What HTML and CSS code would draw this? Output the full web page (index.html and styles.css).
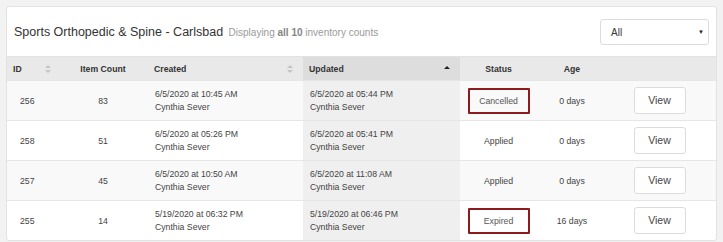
FILE: index.html
```html
<!DOCTYPE html>
<html>
<head>
<meta charset="utf-8">
<link rel="stylesheet" href="styles.css">
</head>
<body>
<div class="card">
  <div class="card-head">
    <div class="title">Sports Orthopedic &amp; Spine - Carlsbad <span class="sub">Displaying <b>all 10</b> inventory counts</span></div>
    <div class="select"><span>All</span><span class="caret">&#9660;</span></div>
  </div>
  <table class="grid">
    <colgroup>
      <col class="c-id"><col class="c-count"><col class="c-created"><col class="c-updated"><col class="c-status"><col class="c-age"><col class="c-view">
    </colgroup>
    <thead>
      <tr>
        <th class="left"><div class="th-in th-id">ID<svg class="sort" width="6" height="8" viewBox="0 0 6 8"><path d="M3 0L6 3H0z M3 8L6 5H0z" fill="#c4c4c4"/></svg></div></th>
        <th>Item Count</th>
        <th class="left"><div class="th-in">Created<svg class="sort" width="6" height="8" viewBox="0 0 6 8"><path d="M3 0L6 3H0z M3 8L6 5H0z" fill="#c4c4c4"/></svg></div></th>
        <th class="left sorted"><div class="th-in">Updated<svg class="sort" width="6" height="8" viewBox="0 0 6 8"><path d="M3 1L6 4H0z" fill="#222"/></svg></div></th>
        <th>Status</th>
        <th>Age</th>
        <th></th>
      </tr>
    </thead>
    <tbody>
      <tr class="odd">
        <td class="id">256</td><td class="center">83</td>
        <td class="date">6/5/2020 at 10:45 AM<br>Cynthia Sever</td>
        <td class="date sorted">6/5/2020 at 05:44 PM<br>Cynthia Sever</td>
        <td class="center"><span class="badge">Cancelled</span></td>
        <td class="center">0 days</td>
        <td class="center"><span class="btn">View</span></td>
      </tr>
      <tr>
        <td class="id">258</td><td class="center">51</td>
        <td class="date">6/5/2020 at 05:26 PM<br>Cynthia Sever</td>
        <td class="date sorted">6/5/2020 at 05:41 PM<br>Cynthia Sever</td>
        <td class="center">Applied</td>
        <td class="center">0 days</td>
        <td class="center"><span class="btn">View</span></td>
      </tr>
      <tr class="odd">
        <td class="id">257</td><td class="center">45</td>
        <td class="date">6/5/2020 at 10:50 AM<br>Cynthia Sever</td>
        <td class="date sorted">6/5/2020 at 11:08 AM<br>Cynthia Sever</td>
        <td class="center">Applied</td>
        <td class="center">0 days</td>
        <td class="center"><span class="btn">View</span></td>
      </tr>
      <tr>
        <td class="id">255</td><td class="center">14</td>
        <td class="date">5/19/2020 at 06:32 PM<br>Cynthia Sever</td>
        <td class="date sorted">5/19/2020 at 06:46 PM<br>Cynthia Sever</td>
        <td class="center"><span class="badge">Expired</span></td>
        <td class="center">16 days</td>
        <td class="center"><span class="btn">View</span></td>
      </tr>
    </tbody>
  </table>
</div>
</body>
</html>
```
FILE: styles.css
```css
html, body { margin: 0; padding: 0; }
body {
  background: #f2f2f2;
  padding: 6px;
  font-family: "Liberation Sans", Arial, sans-serif;
  color: #333;
  font-size: 9px;
}
.card {
  background: #fff;
  border: 1px solid #e2e2e2;
  border-radius: 3px;
  width: 709px;
}
.card-head {
  height: 49px;
  display: flex;
  align-items: center;
  justify-content: space-between;
  padding: 0 7px;
}
.title {
  font-size: 12.5px;
  color: #333;
  padding-top: 1px;
}
.sub {
  font-size: 10px;
  color: #9a9a9a;
  margin-left: 2px;
}
.sub b { color: #858585; }
.select {
  box-sizing: border-box;
  width: 109px;
  height: 26px;
  border: 1px solid #dcdcdc;
  border-radius: 3px;
  display: flex;
  align-items: center;
  justify-content: space-between;
  padding: 0 4px 0 10px;
  font-size: 10px;
  color: #333;
  margin-top: 1px;
}
.caret { font-size: 6px; color: #222; }
.grid {
  width: 709px;
  border-collapse: collapse;
  table-layout: fixed;
}
.c-id { width: 51px; }
.c-count { width: 90px; }
.c-created { width: 155px; }
.c-updated { width: 157px; }
.c-status { width: 77px; }
.c-age { width: 70px; }
.c-view { width: 109px; }
th {
  background: #e9e9e9;
  height: 23px;
  padding: 0 6px;
  font-weight: bold;
  font-size: 8.7px;
  text-align: center;
  color: #333;
  border-top: 1px solid #e2e2e2;
}
th.left { text-align: left; }
th.sorted { background: #dddddd; }
.th-in {
  display: flex;
  justify-content: space-between;
  align-items: center;
  padding-right: 4px;
}
.th-in.th-id { padding-right: 1px; }
.sort { display: block; }
td {
  height: 39px;
  border-top: 1px solid #e6e6e6;
  padding: 0 7px;
  vertical-align: middle;
  font-size: 8.7px;
  color: #444;
}
tr.odd td { background: #f9f9f9; }
td.sorted, tr.odd td.sorted { background: #efefef; }
td.id { padding-left: 13px; }
td.center { text-align: center; }
td.date { line-height: 13px; }
.badge {
  display: inline-block;
  box-sizing: border-box;
  width: 62px;
  height: 26px;
  line-height: 22px;
  border: 2px solid #8d1b1e;
  border-radius: 1px;
  color: #555;
}
.btn {
  display: inline-block;
  box-sizing: border-box;
  width: 52px;
  height: 27px;
  line-height: 25px;
  border: 1px solid #dcdcdc;
  border-radius: 3px;
  font-size: 10.5px;
  background: #fff;
  margin-right: 4px;
  color: #444;
}
```
